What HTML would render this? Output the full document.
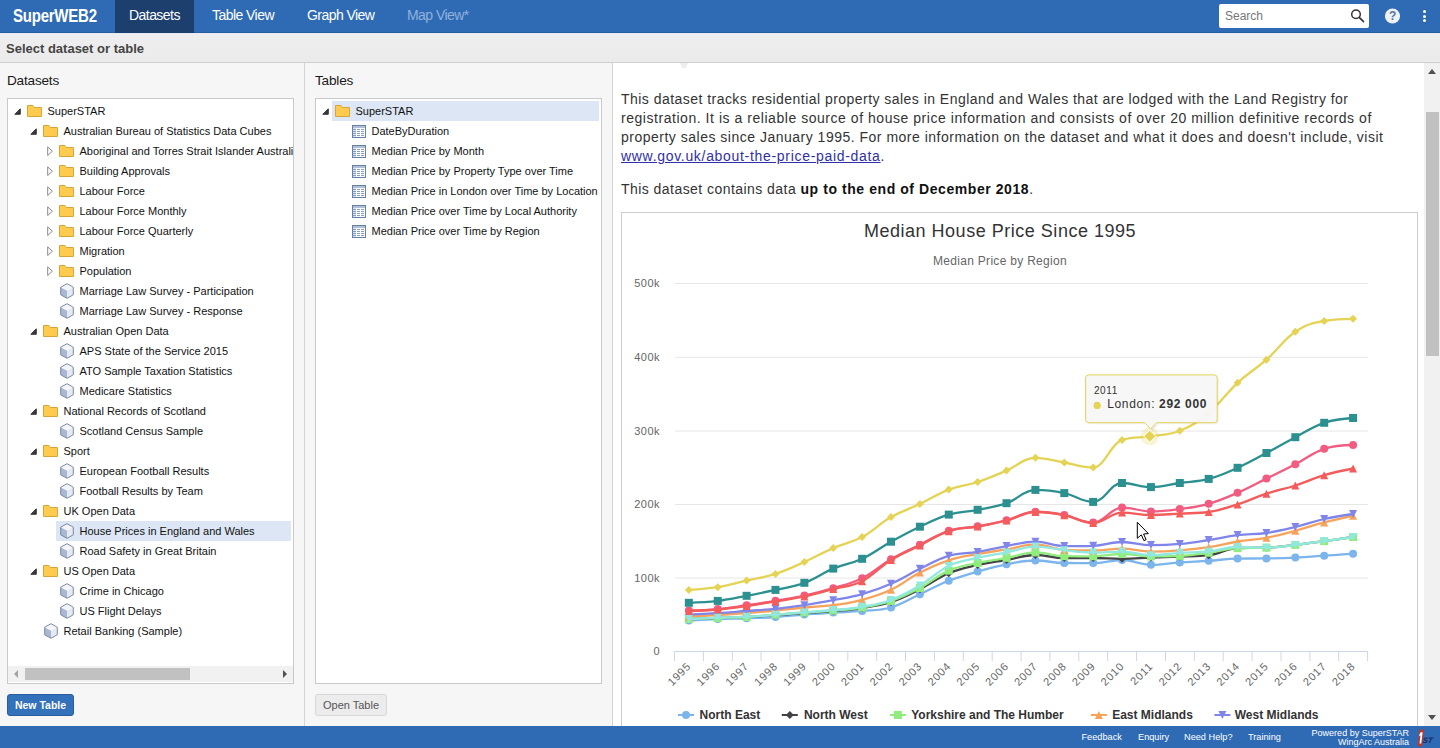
<!DOCTYPE html>
<html><head><meta charset="utf-8">
<style>
*{box-sizing:border-box}
html,body{margin:0;padding:0;width:1440px;height:748px;overflow:hidden;background:#f6f6f6;font-family:"Liberation Sans",sans-serif;color:#222}
.abs{position:absolute}
#hdr{position:absolute;left:0;top:0;width:1440px;height:33px;background:#2f6bb5;border-bottom:1px solid #2a5e9f}
#hdr .nav{position:absolute;top:0;height:33px;line-height:31px;font-size:14px;color:#fff;white-space:nowrap;letter-spacing:-0.55px}
#logo{position:absolute;left:13px;top:0;line-height:32px;font-size:19px;font-weight:bold;color:#fff;transform:scaleX(0.79);transform-origin:0 0;white-space:nowrap;letter-spacing:-0.3px}
#sub{position:absolute;left:0;top:33px;width:1440px;height:30px;background:linear-gradient(#eeeef0,#ebebeb);border-top:1px solid #e6eaf3;border-bottom:1px solid #cfcfcf}
#sub span{position:absolute;left:6px;top:7px;font-size:13px;font-weight:bold;color:#444}
.panel{position:absolute;top:63px;height:663px;background:#f6f6f6}
.ptitle{position:absolute;top:73px;font-size:13.6px;letter-spacing:-0.2px;color:#1a1a1a}
.tbox{position:absolute;top:98px;height:586px;background:#fff;border:1px solid #c9c9c9;overflow:hidden}
.row{position:absolute;height:20px;line-height:20px;font-size:11px;color:#111;white-space:nowrap}
.sel{position:absolute;height:20px;background:#dce6f4}
.fold{position:absolute;width:15px;height:12px}
.btn{position:absolute;top:694px;height:22px;border-radius:3px;font-size:11px;line-height:20px;text-align:center;white-space:nowrap}
#right{position:absolute;left:613px;top:63px;width:811px;height:663px;background:#fff}
#vscroll{position:absolute;left:1424px;top:63px;width:16px;height:663px;background:#f1f1f1}
#ftr{position:absolute;left:0;top:726px;width:1440px;height:22px;background:#2f6bb5;color:#fff;font-size:10.5px}
#ftr span{position:absolute;white-space:nowrap}
p.c{position:absolute;margin:0;left:621px;font-size:14px;line-height:19px;color:#333;white-space:nowrap;letter-spacing:0.42px}
</style></head><body>

<div id="hdr">
  <div id="logo">SuperWEB2</div>
  <div class="abs" style="left:115px;top:0;width:79px;height:33px;background:#1c3f6e"></div>
  <div class="nav" style="left:129px">Datasets</div>
  <div class="nav" style="left:212px">Table View</div>
  <div class="nav" style="left:307px">Graph View</div>
  <div class="nav" style="left:407px;color:#8fb1dc">Map View*</div>
  <div class="abs" style="left:1219px;top:4px;width:150px;height:24px;background:#fff;border-radius:2px"></div>
  <div class="abs" style="left:1225px;top:9px;font-size:12px;color:#777">Search</div>
  <svg class="abs" style="left:1349px;top:8px" width="16" height="16" viewBox="0 0 16 16"><circle cx="7" cy="6.2" r="4.3" fill="none" stroke="#333" stroke-width="1.5"/><path d="M10.2 9.4 L14.5 13.6" stroke="#333" stroke-width="1.6" stroke-linecap="round"/></svg>
  <svg class="abs" style="left:1384px;top:8px" width="17" height="17" viewBox="0 0 17 17"><circle cx="8.5" cy="8" r="7.6" fill="#eef2f8"/><text x="8.6" y="12.4" text-anchor="middle" font-size="12" font-weight="bold" fill="#56739f" font-family="Liberation Sans">?</text></svg>
  <div class="abs" style="left:1423px;top:9.6px;width:3px;height:3px;background:#fff;border-radius:2px"></div>
  <div class="abs" style="left:1423px;top:14.5px;width:3px;height:3px;background:#fff;border-radius:2px"></div>
  <div class="abs" style="left:1423px;top:19.3px;width:3px;height:3px;background:#fff;border-radius:2px"></div>
</div>

<div id="sub"><span>Select dataset or table</span></div>

<!-- LEFT PANEL -->
<div class="panel" style="left:0;width:305px;border-right:1px solid #d4d4d4"></div>
<div class="ptitle" style="left:7px">Datasets</div>
<div class="tbox" style="left:7px;width:287px" id="dtree">
<svg class="abs" style="left:6px;top:8.5px" width="8" height="8" viewBox="0 0 8 8"><path d="M6.3 0.8 L6.3 6.3 L0.8 6.3 Z" fill="#3a3a3a" stroke="#2a2a2a" stroke-width="0.9" stroke-linejoin="round"/></svg>
<svg class="abs" style="left:19px;top:6px" width="15" height="12" viewBox="0 0 15 12"><path d="M0.5 0.5 L6 0.5 L7.5 2.5 L14.5 2.5 L14.5 11.5 L0.5 11.5 Z" fill="#fecb4f" stroke="#d6a63a" stroke-width="1"/></svg>
<div class="row" style="left:39.5px;top:2px">SuperSTAR</div>
<svg class="abs" style="left:22px;top:28.5px" width="8" height="8" viewBox="0 0 8 8"><path d="M6.3 0.8 L6.3 6.3 L0.8 6.3 Z" fill="#3a3a3a" stroke="#2a2a2a" stroke-width="0.9" stroke-linejoin="round"/></svg>
<svg class="abs" style="left:35px;top:26px" width="15" height="12" viewBox="0 0 15 12"><path d="M0.5 0.5 L6 0.5 L7.5 2.5 L14.5 2.5 L14.5 11.5 L0.5 11.5 Z" fill="#fecb4f" stroke="#d6a63a" stroke-width="1"/></svg>
<div class="row" style="left:55.5px;top:22px">Australian Bureau of Statistics Data Cubes</div>
<svg class="abs" style="left:39px;top:47px" width="7" height="11" viewBox="0 0 7 11"><path d="M0.7 0.9 L5.4 5.2 L0.7 9.5 Z" fill="#fff" stroke="#8a8a8a" stroke-width="1" stroke-linejoin="round"/></svg>
<svg class="abs" style="left:51px;top:46px" width="15" height="12" viewBox="0 0 15 12"><path d="M0.5 0.5 L6 0.5 L7.5 2.5 L14.5 2.5 L14.5 11.5 L0.5 11.5 Z" fill="#fecb4f" stroke="#d6a63a" stroke-width="1"/></svg>
<div class="row" style="left:71.5px;top:42px">Aboriginal and Torres Strait Islander Australians</div>
<svg class="abs" style="left:39px;top:67px" width="7" height="11" viewBox="0 0 7 11"><path d="M0.7 0.9 L5.4 5.2 L0.7 9.5 Z" fill="#fff" stroke="#8a8a8a" stroke-width="1" stroke-linejoin="round"/></svg>
<svg class="abs" style="left:51px;top:66px" width="15" height="12" viewBox="0 0 15 12"><path d="M0.5 0.5 L6 0.5 L7.5 2.5 L14.5 2.5 L14.5 11.5 L0.5 11.5 Z" fill="#fecb4f" stroke="#d6a63a" stroke-width="1"/></svg>
<div class="row" style="left:71.5px;top:62px">Building Approvals</div>
<svg class="abs" style="left:39px;top:87px" width="7" height="11" viewBox="0 0 7 11"><path d="M0.7 0.9 L5.4 5.2 L0.7 9.5 Z" fill="#fff" stroke="#8a8a8a" stroke-width="1" stroke-linejoin="round"/></svg>
<svg class="abs" style="left:51px;top:86px" width="15" height="12" viewBox="0 0 15 12"><path d="M0.5 0.5 L6 0.5 L7.5 2.5 L14.5 2.5 L14.5 11.5 L0.5 11.5 Z" fill="#fecb4f" stroke="#d6a63a" stroke-width="1"/></svg>
<div class="row" style="left:71.5px;top:82px">Labour Force</div>
<svg class="abs" style="left:39px;top:107px" width="7" height="11" viewBox="0 0 7 11"><path d="M0.7 0.9 L5.4 5.2 L0.7 9.5 Z" fill="#fff" stroke="#8a8a8a" stroke-width="1" stroke-linejoin="round"/></svg>
<svg class="abs" style="left:51px;top:106px" width="15" height="12" viewBox="0 0 15 12"><path d="M0.5 0.5 L6 0.5 L7.5 2.5 L14.5 2.5 L14.5 11.5 L0.5 11.5 Z" fill="#fecb4f" stroke="#d6a63a" stroke-width="1"/></svg>
<div class="row" style="left:71.5px;top:102px">Labour Force Monthly</div>
<svg class="abs" style="left:39px;top:127px" width="7" height="11" viewBox="0 0 7 11"><path d="M0.7 0.9 L5.4 5.2 L0.7 9.5 Z" fill="#fff" stroke="#8a8a8a" stroke-width="1" stroke-linejoin="round"/></svg>
<svg class="abs" style="left:51px;top:126px" width="15" height="12" viewBox="0 0 15 12"><path d="M0.5 0.5 L6 0.5 L7.5 2.5 L14.5 2.5 L14.5 11.5 L0.5 11.5 Z" fill="#fecb4f" stroke="#d6a63a" stroke-width="1"/></svg>
<div class="row" style="left:71.5px;top:122px">Labour Force Quarterly</div>
<svg class="abs" style="left:39px;top:147px" width="7" height="11" viewBox="0 0 7 11"><path d="M0.7 0.9 L5.4 5.2 L0.7 9.5 Z" fill="#fff" stroke="#8a8a8a" stroke-width="1" stroke-linejoin="round"/></svg>
<svg class="abs" style="left:51px;top:146px" width="15" height="12" viewBox="0 0 15 12"><path d="M0.5 0.5 L6 0.5 L7.5 2.5 L14.5 2.5 L14.5 11.5 L0.5 11.5 Z" fill="#fecb4f" stroke="#d6a63a" stroke-width="1"/></svg>
<div class="row" style="left:71.5px;top:142px">Migration</div>
<svg class="abs" style="left:39px;top:167px" width="7" height="11" viewBox="0 0 7 11"><path d="M0.7 0.9 L5.4 5.2 L0.7 9.5 Z" fill="#fff" stroke="#8a8a8a" stroke-width="1" stroke-linejoin="round"/></svg>
<svg class="abs" style="left:51px;top:166px" width="15" height="12" viewBox="0 0 15 12"><path d="M0.5 0.5 L6 0.5 L7.5 2.5 L14.5 2.5 L14.5 11.5 L0.5 11.5 Z" fill="#fecb4f" stroke="#d6a63a" stroke-width="1"/></svg>
<div class="row" style="left:71.5px;top:162px">Population</div>
<svg class="abs" style="left:52px;top:184px" width="14" height="16" viewBox="0 0 14 16"><path d="M0.7 4.2 L7 7.6 L7 15.3 L0.7 11.8 Z" fill="#a9b9d4"/><path d="M7 7.6 L13.3 4.2 L13.3 11.8 L7 15.3 Z" fill="#e4e9f3"/><path d="M0.7 4.2 L7 0.7 L13.3 4.2 L7 7.6 Z" fill="#f3f5f9"/><path d="M7 0.7 L13.3 4.2 L13.3 11.8 L7 15.3 L0.7 11.8 L0.7 4.2 Z" fill="none" stroke="#6f7f98" stroke-width="0.9" stroke-linejoin="round"/></svg>
<div class="row" style="left:71.5px;top:182px">Marriage Law Survey - Participation</div>
<svg class="abs" style="left:52px;top:204px" width="14" height="16" viewBox="0 0 14 16"><path d="M0.7 4.2 L7 7.6 L7 15.3 L0.7 11.8 Z" fill="#a9b9d4"/><path d="M7 7.6 L13.3 4.2 L13.3 11.8 L7 15.3 Z" fill="#e4e9f3"/><path d="M0.7 4.2 L7 0.7 L13.3 4.2 L7 7.6 Z" fill="#f3f5f9"/><path d="M7 0.7 L13.3 4.2 L13.3 11.8 L7 15.3 L0.7 11.8 L0.7 4.2 Z" fill="none" stroke="#6f7f98" stroke-width="0.9" stroke-linejoin="round"/></svg>
<div class="row" style="left:71.5px;top:202px">Marriage Law Survey - Response</div>
<svg class="abs" style="left:22px;top:228.5px" width="8" height="8" viewBox="0 0 8 8"><path d="M6.3 0.8 L6.3 6.3 L0.8 6.3 Z" fill="#3a3a3a" stroke="#2a2a2a" stroke-width="0.9" stroke-linejoin="round"/></svg>
<svg class="abs" style="left:35px;top:226px" width="15" height="12" viewBox="0 0 15 12"><path d="M0.5 0.5 L6 0.5 L7.5 2.5 L14.5 2.5 L14.5 11.5 L0.5 11.5 Z" fill="#fecb4f" stroke="#d6a63a" stroke-width="1"/></svg>
<div class="row" style="left:55.5px;top:222px">Australian Open Data</div>
<svg class="abs" style="left:52px;top:244px" width="14" height="16" viewBox="0 0 14 16"><path d="M0.7 4.2 L7 7.6 L7 15.3 L0.7 11.8 Z" fill="#a9b9d4"/><path d="M7 7.6 L13.3 4.2 L13.3 11.8 L7 15.3 Z" fill="#e4e9f3"/><path d="M0.7 4.2 L7 0.7 L13.3 4.2 L7 7.6 Z" fill="#f3f5f9"/><path d="M7 0.7 L13.3 4.2 L13.3 11.8 L7 15.3 L0.7 11.8 L0.7 4.2 Z" fill="none" stroke="#6f7f98" stroke-width="0.9" stroke-linejoin="round"/></svg>
<div class="row" style="left:71.5px;top:242px">APS State of the Service 2015</div>
<svg class="abs" style="left:52px;top:264px" width="14" height="16" viewBox="0 0 14 16"><path d="M0.7 4.2 L7 7.6 L7 15.3 L0.7 11.8 Z" fill="#a9b9d4"/><path d="M7 7.6 L13.3 4.2 L13.3 11.8 L7 15.3 Z" fill="#e4e9f3"/><path d="M0.7 4.2 L7 0.7 L13.3 4.2 L7 7.6 Z" fill="#f3f5f9"/><path d="M7 0.7 L13.3 4.2 L13.3 11.8 L7 15.3 L0.7 11.8 L0.7 4.2 Z" fill="none" stroke="#6f7f98" stroke-width="0.9" stroke-linejoin="round"/></svg>
<div class="row" style="left:71.5px;top:262px">ATO Sample Taxation Statistics</div>
<svg class="abs" style="left:52px;top:284px" width="14" height="16" viewBox="0 0 14 16"><path d="M0.7 4.2 L7 7.6 L7 15.3 L0.7 11.8 Z" fill="#a9b9d4"/><path d="M7 7.6 L13.3 4.2 L13.3 11.8 L7 15.3 Z" fill="#e4e9f3"/><path d="M0.7 4.2 L7 0.7 L13.3 4.2 L7 7.6 Z" fill="#f3f5f9"/><path d="M7 0.7 L13.3 4.2 L13.3 11.8 L7 15.3 L0.7 11.8 L0.7 4.2 Z" fill="none" stroke="#6f7f98" stroke-width="0.9" stroke-linejoin="round"/></svg>
<div class="row" style="left:71.5px;top:282px">Medicare Statistics</div>
<svg class="abs" style="left:22px;top:308.5px" width="8" height="8" viewBox="0 0 8 8"><path d="M6.3 0.8 L6.3 6.3 L0.8 6.3 Z" fill="#3a3a3a" stroke="#2a2a2a" stroke-width="0.9" stroke-linejoin="round"/></svg>
<svg class="abs" style="left:35px;top:306px" width="15" height="12" viewBox="0 0 15 12"><path d="M0.5 0.5 L6 0.5 L7.5 2.5 L14.5 2.5 L14.5 11.5 L0.5 11.5 Z" fill="#fecb4f" stroke="#d6a63a" stroke-width="1"/></svg>
<div class="row" style="left:55.5px;top:302px">National Records of Scotland</div>
<svg class="abs" style="left:52px;top:324px" width="14" height="16" viewBox="0 0 14 16"><path d="M0.7 4.2 L7 7.6 L7 15.3 L0.7 11.8 Z" fill="#a9b9d4"/><path d="M7 7.6 L13.3 4.2 L13.3 11.8 L7 15.3 Z" fill="#e4e9f3"/><path d="M0.7 4.2 L7 0.7 L13.3 4.2 L7 7.6 Z" fill="#f3f5f9"/><path d="M7 0.7 L13.3 4.2 L13.3 11.8 L7 15.3 L0.7 11.8 L0.7 4.2 Z" fill="none" stroke="#6f7f98" stroke-width="0.9" stroke-linejoin="round"/></svg>
<div class="row" style="left:71.5px;top:322px">Scotland Census Sample</div>
<svg class="abs" style="left:22px;top:348.5px" width="8" height="8" viewBox="0 0 8 8"><path d="M6.3 0.8 L6.3 6.3 L0.8 6.3 Z" fill="#3a3a3a" stroke="#2a2a2a" stroke-width="0.9" stroke-linejoin="round"/></svg>
<svg class="abs" style="left:35px;top:346px" width="15" height="12" viewBox="0 0 15 12"><path d="M0.5 0.5 L6 0.5 L7.5 2.5 L14.5 2.5 L14.5 11.5 L0.5 11.5 Z" fill="#fecb4f" stroke="#d6a63a" stroke-width="1"/></svg>
<div class="row" style="left:55.5px;top:342px">Sport</div>
<svg class="abs" style="left:52px;top:364px" width="14" height="16" viewBox="0 0 14 16"><path d="M0.7 4.2 L7 7.6 L7 15.3 L0.7 11.8 Z" fill="#a9b9d4"/><path d="M7 7.6 L13.3 4.2 L13.3 11.8 L7 15.3 Z" fill="#e4e9f3"/><path d="M0.7 4.2 L7 0.7 L13.3 4.2 L7 7.6 Z" fill="#f3f5f9"/><path d="M7 0.7 L13.3 4.2 L13.3 11.8 L7 15.3 L0.7 11.8 L0.7 4.2 Z" fill="none" stroke="#6f7f98" stroke-width="0.9" stroke-linejoin="round"/></svg>
<div class="row" style="left:71.5px;top:362px">European Football Results</div>
<svg class="abs" style="left:52px;top:384px" width="14" height="16" viewBox="0 0 14 16"><path d="M0.7 4.2 L7 7.6 L7 15.3 L0.7 11.8 Z" fill="#a9b9d4"/><path d="M7 7.6 L13.3 4.2 L13.3 11.8 L7 15.3 Z" fill="#e4e9f3"/><path d="M0.7 4.2 L7 0.7 L13.3 4.2 L7 7.6 Z" fill="#f3f5f9"/><path d="M7 0.7 L13.3 4.2 L13.3 11.8 L7 15.3 L0.7 11.8 L0.7 4.2 Z" fill="none" stroke="#6f7f98" stroke-width="0.9" stroke-linejoin="round"/></svg>
<div class="row" style="left:71.5px;top:382px">Football Results by Team</div>
<svg class="abs" style="left:22px;top:408.5px" width="8" height="8" viewBox="0 0 8 8"><path d="M6.3 0.8 L6.3 6.3 L0.8 6.3 Z" fill="#3a3a3a" stroke="#2a2a2a" stroke-width="0.9" stroke-linejoin="round"/></svg>
<svg class="abs" style="left:35px;top:406px" width="15" height="12" viewBox="0 0 15 12"><path d="M0.5 0.5 L6 0.5 L7.5 2.5 L14.5 2.5 L14.5 11.5 L0.5 11.5 Z" fill="#fecb4f" stroke="#d6a63a" stroke-width="1"/></svg>
<div class="row" style="left:55.5px;top:402px">UK Open Data</div>
<div class="sel" style="left:48px;top:422px;width:235px"></div>
<svg class="abs" style="left:52px;top:424px" width="14" height="16" viewBox="0 0 14 16"><path d="M0.7 4.2 L7 7.6 L7 15.3 L0.7 11.8 Z" fill="#a9b9d4"/><path d="M7 7.6 L13.3 4.2 L13.3 11.8 L7 15.3 Z" fill="#e4e9f3"/><path d="M0.7 4.2 L7 0.7 L13.3 4.2 L7 7.6 Z" fill="#f3f5f9"/><path d="M7 0.7 L13.3 4.2 L13.3 11.8 L7 15.3 L0.7 11.8 L0.7 4.2 Z" fill="none" stroke="#6f7f98" stroke-width="0.9" stroke-linejoin="round"/></svg>
<div class="row" style="left:71.5px;top:422px">House Prices in England and Wales</div>
<svg class="abs" style="left:52px;top:444px" width="14" height="16" viewBox="0 0 14 16"><path d="M0.7 4.2 L7 7.6 L7 15.3 L0.7 11.8 Z" fill="#a9b9d4"/><path d="M7 7.6 L13.3 4.2 L13.3 11.8 L7 15.3 Z" fill="#e4e9f3"/><path d="M0.7 4.2 L7 0.7 L13.3 4.2 L7 7.6 Z" fill="#f3f5f9"/><path d="M7 0.7 L13.3 4.2 L13.3 11.8 L7 15.3 L0.7 11.8 L0.7 4.2 Z" fill="none" stroke="#6f7f98" stroke-width="0.9" stroke-linejoin="round"/></svg>
<div class="row" style="left:71.5px;top:442px">Road Safety in Great Britain</div>
<svg class="abs" style="left:22px;top:468.5px" width="8" height="8" viewBox="0 0 8 8"><path d="M6.3 0.8 L6.3 6.3 L0.8 6.3 Z" fill="#3a3a3a" stroke="#2a2a2a" stroke-width="0.9" stroke-linejoin="round"/></svg>
<svg class="abs" style="left:35px;top:466px" width="15" height="12" viewBox="0 0 15 12"><path d="M0.5 0.5 L6 0.5 L7.5 2.5 L14.5 2.5 L14.5 11.5 L0.5 11.5 Z" fill="#fecb4f" stroke="#d6a63a" stroke-width="1"/></svg>
<div class="row" style="left:55.5px;top:462px">US Open Data</div>
<svg class="abs" style="left:52px;top:484px" width="14" height="16" viewBox="0 0 14 16"><path d="M0.7 4.2 L7 7.6 L7 15.3 L0.7 11.8 Z" fill="#a9b9d4"/><path d="M7 7.6 L13.3 4.2 L13.3 11.8 L7 15.3 Z" fill="#e4e9f3"/><path d="M0.7 4.2 L7 0.7 L13.3 4.2 L7 7.6 Z" fill="#f3f5f9"/><path d="M7 0.7 L13.3 4.2 L13.3 11.8 L7 15.3 L0.7 11.8 L0.7 4.2 Z" fill="none" stroke="#6f7f98" stroke-width="0.9" stroke-linejoin="round"/></svg>
<div class="row" style="left:71.5px;top:482px">Crime in Chicago</div>
<svg class="abs" style="left:52px;top:504px" width="14" height="16" viewBox="0 0 14 16"><path d="M0.7 4.2 L7 7.6 L7 15.3 L0.7 11.8 Z" fill="#a9b9d4"/><path d="M7 7.6 L13.3 4.2 L13.3 11.8 L7 15.3 Z" fill="#e4e9f3"/><path d="M0.7 4.2 L7 0.7 L13.3 4.2 L7 7.6 Z" fill="#f3f5f9"/><path d="M7 0.7 L13.3 4.2 L13.3 11.8 L7 15.3 L0.7 11.8 L0.7 4.2 Z" fill="none" stroke="#6f7f98" stroke-width="0.9" stroke-linejoin="round"/></svg>
<div class="row" style="left:71.5px;top:502px">US Flight Delays</div>
<svg class="abs" style="left:36px;top:524px" width="14" height="16" viewBox="0 0 14 16"><path d="M0.7 4.2 L7 7.6 L7 15.3 L0.7 11.8 Z" fill="#a9b9d4"/><path d="M7 7.6 L13.3 4.2 L13.3 11.8 L7 15.3 Z" fill="#e4e9f3"/><path d="M0.7 4.2 L7 0.7 L13.3 4.2 L7 7.6 Z" fill="#f3f5f9"/><path d="M7 0.7 L13.3 4.2 L13.3 11.8 L7 15.3 L0.7 11.8 L0.7 4.2 Z" fill="none" stroke="#6f7f98" stroke-width="0.9" stroke-linejoin="round"/></svg>
<div class="row" style="left:55.5px;top:522px">Retail Banking (Sample)</div>
<div class="abs" style="left:0;top:567px;width:285px;height:16px;background:#f1f1f1"></div>
<div class="abs" style="left:17px;top:569px;width:165px;height:12px;background:#c1c1c1"></div>
<svg class="abs" style="left:3px;top:569px" width="10" height="12"><path d="M7 2 L7 10 L3 6 Z" fill="#a3a3a3"/></svg>
<svg class="abs" style="left:272px;top:569px" width="10" height="12"><path d="M3 2 L3 10 L7 6 Z" fill="#505050"/></svg>
</div>
<div class="btn" style="left:7px;width:67px;background:#3471bb;border:1px solid #2a5d9f;color:#fff;font-weight:bold;font-size:10.5px">New Table</div>

<!-- MIDDLE PANEL -->
<div class="panel" style="left:305px;width:308px;border-right:1px solid #d4d4d4"></div>
<div class="ptitle" style="left:315px">Tables</div>
<div class="tbox" style="left:315px;width:287px" id="ttree">
<div class="sel" style="left:16px;top:2px;width:267px"></div>
<svg class="abs" style="left:6px;top:8.5px" width="8" height="8" viewBox="0 0 8 8"><path d="M6.3 0.8 L6.3 6.3 L0.8 6.3 Z" fill="#3a3a3a" stroke="#2a2a2a" stroke-width="0.9" stroke-linejoin="round"/></svg>
<svg class="abs" style="left:19px;top:6px" width="15" height="12" viewBox="0 0 15 12"><path d="M0.5 0.5 L6 0.5 L7.5 2.5 L14.5 2.5 L14.5 11.5 L0.5 11.5 Z" fill="#fecb4f" stroke="#d6a63a" stroke-width="1"/></svg>
<div class="row" style="left:39.5px;top:2px">SuperSTAR</div>
<svg class="abs" style="left:36px;top:26px" width="14" height="13" viewBox="0 0 14 13" shape-rendering="crispEdges"><rect x="0" y="0" width="14" height="13" fill="#6580ab"/><rect x="1" y="1" width="12" height="11" fill="#fbfdff"/><rect x="1" y="1" width="12" height="2" fill="#b3bfd2"/><rect x="1" y="3" width="3" height="9" fill="#d3e3fa"/><g fill="#8f9fbb"><rect x="1" y="4" width="3" height="1"/><rect x="5" y="4" width="3" height="1"/><rect x="9" y="4" width="3" height="1"/><rect x="1" y="6" width="3" height="1"/><rect x="5" y="6" width="3" height="1"/><rect x="9" y="6" width="3" height="1"/><rect x="1" y="8" width="3" height="1"/><rect x="5" y="8" width="3" height="1"/><rect x="9" y="8" width="3" height="1"/><rect x="1" y="10" width="3" height="1"/><rect x="5" y="10" width="3" height="1"/><rect x="9" y="10" width="3" height="1"/></g></svg>
<div class="row" style="left:55.5px;top:22px">DateByDuration</div>
<svg class="abs" style="left:36px;top:46px" width="14" height="13" viewBox="0 0 14 13" shape-rendering="crispEdges"><rect x="0" y="0" width="14" height="13" fill="#6580ab"/><rect x="1" y="1" width="12" height="11" fill="#fbfdff"/><rect x="1" y="1" width="12" height="2" fill="#b3bfd2"/><rect x="1" y="3" width="3" height="9" fill="#d3e3fa"/><g fill="#8f9fbb"><rect x="1" y="4" width="3" height="1"/><rect x="5" y="4" width="3" height="1"/><rect x="9" y="4" width="3" height="1"/><rect x="1" y="6" width="3" height="1"/><rect x="5" y="6" width="3" height="1"/><rect x="9" y="6" width="3" height="1"/><rect x="1" y="8" width="3" height="1"/><rect x="5" y="8" width="3" height="1"/><rect x="9" y="8" width="3" height="1"/><rect x="1" y="10" width="3" height="1"/><rect x="5" y="10" width="3" height="1"/><rect x="9" y="10" width="3" height="1"/></g></svg>
<div class="row" style="left:55.5px;top:42px">Median Price by Month</div>
<svg class="abs" style="left:36px;top:66px" width="14" height="13" viewBox="0 0 14 13" shape-rendering="crispEdges"><rect x="0" y="0" width="14" height="13" fill="#6580ab"/><rect x="1" y="1" width="12" height="11" fill="#fbfdff"/><rect x="1" y="1" width="12" height="2" fill="#b3bfd2"/><rect x="1" y="3" width="3" height="9" fill="#d3e3fa"/><g fill="#8f9fbb"><rect x="1" y="4" width="3" height="1"/><rect x="5" y="4" width="3" height="1"/><rect x="9" y="4" width="3" height="1"/><rect x="1" y="6" width="3" height="1"/><rect x="5" y="6" width="3" height="1"/><rect x="9" y="6" width="3" height="1"/><rect x="1" y="8" width="3" height="1"/><rect x="5" y="8" width="3" height="1"/><rect x="9" y="8" width="3" height="1"/><rect x="1" y="10" width="3" height="1"/><rect x="5" y="10" width="3" height="1"/><rect x="9" y="10" width="3" height="1"/></g></svg>
<div class="row" style="left:55.5px;top:62px">Median Price by Property Type over Time</div>
<svg class="abs" style="left:36px;top:86px" width="14" height="13" viewBox="0 0 14 13" shape-rendering="crispEdges"><rect x="0" y="0" width="14" height="13" fill="#6580ab"/><rect x="1" y="1" width="12" height="11" fill="#fbfdff"/><rect x="1" y="1" width="12" height="2" fill="#b3bfd2"/><rect x="1" y="3" width="3" height="9" fill="#d3e3fa"/><g fill="#8f9fbb"><rect x="1" y="4" width="3" height="1"/><rect x="5" y="4" width="3" height="1"/><rect x="9" y="4" width="3" height="1"/><rect x="1" y="6" width="3" height="1"/><rect x="5" y="6" width="3" height="1"/><rect x="9" y="6" width="3" height="1"/><rect x="1" y="8" width="3" height="1"/><rect x="5" y="8" width="3" height="1"/><rect x="9" y="8" width="3" height="1"/><rect x="1" y="10" width="3" height="1"/><rect x="5" y="10" width="3" height="1"/><rect x="9" y="10" width="3" height="1"/></g></svg>
<div class="row" style="left:55.5px;top:82px">Median Price in London over Time by Location</div>
<svg class="abs" style="left:36px;top:106px" width="14" height="13" viewBox="0 0 14 13" shape-rendering="crispEdges"><rect x="0" y="0" width="14" height="13" fill="#6580ab"/><rect x="1" y="1" width="12" height="11" fill="#fbfdff"/><rect x="1" y="1" width="12" height="2" fill="#b3bfd2"/><rect x="1" y="3" width="3" height="9" fill="#d3e3fa"/><g fill="#8f9fbb"><rect x="1" y="4" width="3" height="1"/><rect x="5" y="4" width="3" height="1"/><rect x="9" y="4" width="3" height="1"/><rect x="1" y="6" width="3" height="1"/><rect x="5" y="6" width="3" height="1"/><rect x="9" y="6" width="3" height="1"/><rect x="1" y="8" width="3" height="1"/><rect x="5" y="8" width="3" height="1"/><rect x="9" y="8" width="3" height="1"/><rect x="1" y="10" width="3" height="1"/><rect x="5" y="10" width="3" height="1"/><rect x="9" y="10" width="3" height="1"/></g></svg>
<div class="row" style="left:55.5px;top:102px">Median Price over Time by Local Authority</div>
<svg class="abs" style="left:36px;top:126px" width="14" height="13" viewBox="0 0 14 13" shape-rendering="crispEdges"><rect x="0" y="0" width="14" height="13" fill="#6580ab"/><rect x="1" y="1" width="12" height="11" fill="#fbfdff"/><rect x="1" y="1" width="12" height="2" fill="#b3bfd2"/><rect x="1" y="3" width="3" height="9" fill="#d3e3fa"/><g fill="#8f9fbb"><rect x="1" y="4" width="3" height="1"/><rect x="5" y="4" width="3" height="1"/><rect x="9" y="4" width="3" height="1"/><rect x="1" y="6" width="3" height="1"/><rect x="5" y="6" width="3" height="1"/><rect x="9" y="6" width="3" height="1"/><rect x="1" y="8" width="3" height="1"/><rect x="5" y="8" width="3" height="1"/><rect x="9" y="8" width="3" height="1"/><rect x="1" y="10" width="3" height="1"/><rect x="5" y="10" width="3" height="1"/><rect x="9" y="10" width="3" height="1"/></g></svg>
<div class="row" style="left:55.5px;top:122px">Median Price over Time by Region</div>
</div>
<div class="btn" style="left:315px;width:72px;background:#ececec;border:1px solid #d8d8d8;color:#555">Open Table</div>

<!-- RIGHT -->
<div id="right"></div>
<p class="c" style="top:90px;letter-spacing:0.463px">This dataset tracks residential property sales in England and Wales that are lodged with the Land Registry for</p>
<p class="c" style="top:109px;letter-spacing:0.54px">registration. It is a reliable source of house price information and consists of over 20 million definitive records of</p>
<p class="c" style="top:128px;letter-spacing:0.5px">property sales since January 1995. For more information on the dataset and what it does and doesn't include, visit</p>
<p class="c" style="top:147px;letter-spacing:0.69px"><span style="color:#3030a8;text-decoration:underline">www.gov.uk/about-the-price-paid-data</span>.</p>
<p class="c" style="top:180px;letter-spacing:0.45px">This dataset contains data <b style="color:#111;letter-spacing:0.57px">up to the end of December 2018</b>.</p>
<div class="abs" style="left:680px;top:63px;width:8px;height:5px;background:#eeeeee;clip-path:polygon(0 0,100% 0,75% 100%,25% 100%)"></div>
<div class="abs" style="left:621px;top:212px;width:797px;height:530px;border:1px solid #cdcdcd;background:#fff"></div>
<svg class="abs" style="left:0;top:0" width="1440" height="726" font-family="Liberation Sans, sans-serif">
<text x="1000" y="236.5" text-anchor="middle" font-size="18" fill="#333333" letter-spacing="0.52">Median House Price Since 1995</text>
<text x="1000" y="264.5" text-anchor="middle" font-size="12" fill="#666666" letter-spacing="0.3">Median Price by Region</text>
<path d="M 675 283.5 L 1368 283.5" stroke="#e6e6e6" stroke-width="1"/>
<path d="M 675 357.3 L 1368 357.3" stroke="#e6e6e6" stroke-width="1"/>
<path d="M 675 431.0 L 1368 431.0" stroke="#e6e6e6" stroke-width="1"/>
<path d="M 675 504.5 L 1368 504.5" stroke="#e6e6e6" stroke-width="1"/>
<path d="M 675 578.0 L 1368 578.0" stroke="#e6e6e6" stroke-width="1"/>
<path d="M 674.5 651.5 L 1367.6 651.5" stroke="#ccd6eb" stroke-width="1"/>
<path d="M 674.5 651.5 L 674.5 661" stroke="#ccd6eb" stroke-width="1"/>
<path d="M 703.4 651.5 L 703.4 661" stroke="#ccd6eb" stroke-width="1"/>
<path d="M 732.3 651.5 L 732.3 661" stroke="#ccd6eb" stroke-width="1"/>
<path d="M 761.1 651.5 L 761.1 661" stroke="#ccd6eb" stroke-width="1"/>
<path d="M 790.0 651.5 L 790.0 661" stroke="#ccd6eb" stroke-width="1"/>
<path d="M 818.9 651.5 L 818.9 661" stroke="#ccd6eb" stroke-width="1"/>
<path d="M 847.8 651.5 L 847.8 661" stroke="#ccd6eb" stroke-width="1"/>
<path d="M 876.7 651.5 L 876.7 661" stroke="#ccd6eb" stroke-width="1"/>
<path d="M 905.5 651.5 L 905.5 661" stroke="#ccd6eb" stroke-width="1"/>
<path d="M 934.4 651.5 L 934.4 661" stroke="#ccd6eb" stroke-width="1"/>
<path d="M 963.3 651.5 L 963.3 661" stroke="#ccd6eb" stroke-width="1"/>
<path d="M 992.2 651.5 L 992.2 661" stroke="#ccd6eb" stroke-width="1"/>
<path d="M 1021.1 651.5 L 1021.1 661" stroke="#ccd6eb" stroke-width="1"/>
<path d="M 1049.9 651.5 L 1049.9 661" stroke="#ccd6eb" stroke-width="1"/>
<path d="M 1078.8 651.5 L 1078.8 661" stroke="#ccd6eb" stroke-width="1"/>
<path d="M 1107.7 651.5 L 1107.7 661" stroke="#ccd6eb" stroke-width="1"/>
<path d="M 1136.6 651.5 L 1136.6 661" stroke="#ccd6eb" stroke-width="1"/>
<path d="M 1165.5 651.5 L 1165.5 661" stroke="#ccd6eb" stroke-width="1"/>
<path d="M 1194.3 651.5 L 1194.3 661" stroke="#ccd6eb" stroke-width="1"/>
<path d="M 1223.2 651.5 L 1223.2 661" stroke="#ccd6eb" stroke-width="1"/>
<path d="M 1252.1 651.5 L 1252.1 661" stroke="#ccd6eb" stroke-width="1"/>
<path d="M 1281.0 651.5 L 1281.0 661" stroke="#ccd6eb" stroke-width="1"/>
<path d="M 1309.9 651.5 L 1309.9 661" stroke="#ccd6eb" stroke-width="1"/>
<path d="M 1338.7 651.5 L 1338.7 661" stroke="#ccd6eb" stroke-width="1"/>
<path d="M 1367.6 651.5 L 1367.6 661" stroke="#ccd6eb" stroke-width="1"/>
<text x="660" y="287.1" text-anchor="end" font-size="11" fill="#666666" letter-spacing="0.5">500k</text>
<text x="660" y="360.9" text-anchor="end" font-size="11" fill="#666666" letter-spacing="0.5">400k</text>
<text x="660" y="434.6" text-anchor="end" font-size="11" fill="#666666" letter-spacing="0.5">300k</text>
<text x="660" y="508.1" text-anchor="end" font-size="11" fill="#666666" letter-spacing="0.5">200k</text>
<text x="660" y="581.6" text-anchor="end" font-size="11" fill="#666666" letter-spacing="0.5">100k</text>
<text x="660" y="655.1" text-anchor="end" font-size="11" fill="#666666" letter-spacing="0.5">0</text>
<text x="691.6" y="667" text-anchor="end" font-size="11" fill="#666666" letter-spacing="0.75" transform="rotate(-45 691.6 667)">1995</text>
<text x="720.5" y="667" text-anchor="end" font-size="11" fill="#666666" letter-spacing="0.75" transform="rotate(-45 720.5 667)">1996</text>
<text x="749.4" y="667" text-anchor="end" font-size="11" fill="#666666" letter-spacing="0.75" transform="rotate(-45 749.4 667)">1997</text>
<text x="778.3" y="667" text-anchor="end" font-size="11" fill="#666666" letter-spacing="0.75" transform="rotate(-45 778.3 667)">1998</text>
<text x="807.2" y="667" text-anchor="end" font-size="11" fill="#666666" letter-spacing="0.75" transform="rotate(-45 807.2 667)">1999</text>
<text x="836.0" y="667" text-anchor="end" font-size="11" fill="#666666" letter-spacing="0.75" transform="rotate(-45 836.0 667)">2000</text>
<text x="864.9" y="667" text-anchor="end" font-size="11" fill="#666666" letter-spacing="0.75" transform="rotate(-45 864.9 667)">2001</text>
<text x="893.8" y="667" text-anchor="end" font-size="11" fill="#666666" letter-spacing="0.75" transform="rotate(-45 893.8 667)">2002</text>
<text x="922.7" y="667" text-anchor="end" font-size="11" fill="#666666" letter-spacing="0.75" transform="rotate(-45 922.7 667)">2003</text>
<text x="951.6" y="667" text-anchor="end" font-size="11" fill="#666666" letter-spacing="0.75" transform="rotate(-45 951.6 667)">2004</text>
<text x="980.5" y="667" text-anchor="end" font-size="11" fill="#666666" letter-spacing="0.75" transform="rotate(-45 980.5 667)">2005</text>
<text x="1009.3" y="667" text-anchor="end" font-size="11" fill="#666666" letter-spacing="0.75" transform="rotate(-45 1009.3 667)">2006</text>
<text x="1038.2" y="667" text-anchor="end" font-size="11" fill="#666666" letter-spacing="0.75" transform="rotate(-45 1038.2 667)">2007</text>
<text x="1067.1" y="667" text-anchor="end" font-size="11" fill="#666666" letter-spacing="0.75" transform="rotate(-45 1067.1 667)">2008</text>
<text x="1096.0" y="667" text-anchor="end" font-size="11" fill="#666666" letter-spacing="0.75" transform="rotate(-45 1096.0 667)">2009</text>
<text x="1124.8" y="667" text-anchor="end" font-size="11" fill="#666666" letter-spacing="0.75" transform="rotate(-45 1124.8 667)">2010</text>
<text x="1153.7" y="667" text-anchor="end" font-size="11" fill="#666666" letter-spacing="0.75" transform="rotate(-45 1153.7 667)">2011</text>
<text x="1182.6" y="667" text-anchor="end" font-size="11" fill="#666666" letter-spacing="0.75" transform="rotate(-45 1182.6 667)">2012</text>
<text x="1211.5" y="667" text-anchor="end" font-size="11" fill="#666666" letter-spacing="0.75" transform="rotate(-45 1211.5 667)">2013</text>
<text x="1240.4" y="667" text-anchor="end" font-size="11" fill="#666666" letter-spacing="0.75" transform="rotate(-45 1240.4 667)">2014</text>
<text x="1269.2" y="667" text-anchor="end" font-size="11" fill="#666666" letter-spacing="0.75" transform="rotate(-45 1269.2 667)">2015</text>
<text x="1298.1" y="667" text-anchor="end" font-size="11" fill="#666666" letter-spacing="0.75" transform="rotate(-45 1298.1 667)">2016</text>
<text x="1327.0" y="667" text-anchor="end" font-size="11" fill="#666666" letter-spacing="0.75" transform="rotate(-45 1327.0 667)">2017</text>
<text x="1355.9" y="667" text-anchor="end" font-size="11" fill="#666666" letter-spacing="0.75" transform="rotate(-45 1355.9 667)">2018</text>
<path d="M 688.85 620.50 C 688.85 620.50 706.18 619.44 717.73 619.00 C 729.28 618.56 735.06 618.70 746.61 618.30 C 758.16 617.90 763.94 617.76 775.49 617.00 C 787.04 616.24 792.82 615.38 804.37 614.50 C 815.92 613.62 821.70 613.32 833.25 612.60 C 844.80 611.88 850.58 611.92 862.13 610.90 C 873.68 609.88 879.46 610.84 891.01 607.50 C 902.56 604.16 908.34 599.54 919.89 594.20 C 931.44 588.86 937.22 585.32 948.77 580.80 C 960.32 576.28 966.10 574.90 977.65 571.60 C 989.20 568.30 994.98 566.52 1006.53 564.30 C 1018.08 562.08 1023.86 560.50 1035.41 560.50 C 1046.96 560.50 1052.74 562.90 1064.29 563.00 C 1075.84 563.10 1081.62 563.10 1093.17 563.10 C 1104.72 563.10 1110.50 560.00 1122.05 560.00 C 1133.60 560.00 1139.38 564.80 1150.93 564.80 C 1162.48 564.80 1168.26 563.20 1179.81 562.40 C 1191.36 561.60 1197.14 561.56 1208.69 560.80 C 1220.24 560.04 1226.02 558.80 1237.57 558.60 C 1249.12 558.40 1254.90 558.60 1266.45 558.40 C 1278.00 558.20 1283.78 558.14 1295.33 557.60 C 1306.88 557.06 1312.66 556.48 1324.21 555.70 C 1335.76 554.92 1353.09 553.70 1353.09 553.70" fill="none" stroke="#7cb5ec" stroke-width="2.3" stroke-linejoin="round" stroke-linecap="round"/>
<circle cx="688.85" cy="620.50" r="4" fill="#7cb5ec"/>
<circle cx="717.73" cy="619.00" r="4" fill="#7cb5ec"/>
<circle cx="746.61" cy="618.30" r="4" fill="#7cb5ec"/>
<circle cx="775.49" cy="617.00" r="4" fill="#7cb5ec"/>
<circle cx="804.37" cy="614.50" r="4" fill="#7cb5ec"/>
<circle cx="833.25" cy="612.60" r="4" fill="#7cb5ec"/>
<circle cx="862.13" cy="610.90" r="4" fill="#7cb5ec"/>
<circle cx="891.01" cy="607.50" r="4" fill="#7cb5ec"/>
<circle cx="919.89" cy="594.20" r="4" fill="#7cb5ec"/>
<circle cx="948.77" cy="580.80" r="4" fill="#7cb5ec"/>
<circle cx="977.65" cy="571.60" r="4" fill="#7cb5ec"/>
<circle cx="1006.53" cy="564.30" r="4" fill="#7cb5ec"/>
<circle cx="1035.41" cy="560.50" r="4" fill="#7cb5ec"/>
<circle cx="1064.29" cy="563.00" r="4" fill="#7cb5ec"/>
<circle cx="1093.17" cy="563.10" r="4" fill="#7cb5ec"/>
<circle cx="1122.05" cy="560.00" r="4" fill="#7cb5ec"/>
<circle cx="1150.93" cy="564.80" r="4" fill="#7cb5ec"/>
<circle cx="1179.81" cy="562.40" r="4" fill="#7cb5ec"/>
<circle cx="1208.69" cy="560.80" r="4" fill="#7cb5ec"/>
<circle cx="1237.57" cy="558.60" r="4" fill="#7cb5ec"/>
<circle cx="1266.45" cy="558.40" r="4" fill="#7cb5ec"/>
<circle cx="1295.33" cy="557.60" r="4" fill="#7cb5ec"/>
<circle cx="1324.21" cy="555.70" r="4" fill="#7cb5ec"/>
<circle cx="1353.09" cy="553.70" r="4" fill="#7cb5ec"/>
<path d="M 688.85 619.00 C 688.85 619.00 706.18 618.40 717.73 618.00 C 729.28 617.60 735.06 617.60 746.61 617.00 C 758.16 616.40 763.94 615.80 775.49 615.00 C 787.04 614.20 792.82 613.80 804.37 613.00 C 815.92 612.20 821.70 612.00 833.25 611.00 C 844.80 610.00 850.58 609.80 862.13 608.00 C 873.68 606.20 879.46 605.76 891.01 602.00 C 902.56 598.24 908.34 594.96 919.89 589.20 C 931.44 583.44 937.22 578.04 948.77 573.20 C 960.32 568.36 966.10 567.64 977.65 565.00 C 989.20 562.36 994.98 562.00 1006.53 560.00 C 1018.08 558.00 1023.86 555.00 1035.41 555.00 C 1046.96 555.00 1052.74 558.00 1064.29 558.00 C 1075.84 558.00 1081.62 558.00 1093.17 558.00 C 1104.72 558.00 1110.50 558.80 1122.05 558.80 C 1133.60 558.80 1139.38 558.06 1150.93 557.60 C 1162.48 557.14 1168.26 556.98 1179.81 556.50 C 1191.36 556.02 1197.14 556.50 1208.69 555.20 C 1220.24 553.90 1226.02 548.30 1237.57 548.00 C 1249.12 547.70 1254.90 548.00 1266.45 547.70 C 1278.00 547.40 1283.78 546.22 1295.33 544.90 C 1306.88 543.58 1312.66 542.68 1324.21 541.10 C 1335.76 539.52 1353.09 537.00 1353.09 537.00" fill="none" stroke="#434348" stroke-width="2.3" stroke-linejoin="round" stroke-linecap="round"/>
<path d="M 688.85 615.00 L 692.85 619.00 L 688.85 623.00 L 684.85 619.00 Z" fill="#434348"/>
<path d="M 717.73 614.00 L 721.73 618.00 L 717.73 622.00 L 713.73 618.00 Z" fill="#434348"/>
<path d="M 746.61 613.00 L 750.61 617.00 L 746.61 621.00 L 742.61 617.00 Z" fill="#434348"/>
<path d="M 775.49 611.00 L 779.49 615.00 L 775.49 619.00 L 771.49 615.00 Z" fill="#434348"/>
<path d="M 804.37 609.00 L 808.37 613.00 L 804.37 617.00 L 800.37 613.00 Z" fill="#434348"/>
<path d="M 833.25 607.00 L 837.25 611.00 L 833.25 615.00 L 829.25 611.00 Z" fill="#434348"/>
<path d="M 862.13 604.00 L 866.13 608.00 L 862.13 612.00 L 858.13 608.00 Z" fill="#434348"/>
<path d="M 891.01 598.00 L 895.01 602.00 L 891.01 606.00 L 887.01 602.00 Z" fill="#434348"/>
<path d="M 919.89 585.20 L 923.89 589.20 L 919.89 593.20 L 915.89 589.20 Z" fill="#434348"/>
<path d="M 948.77 569.20 L 952.77 573.20 L 948.77 577.20 L 944.77 573.20 Z" fill="#434348"/>
<path d="M 977.65 561.00 L 981.65 565.00 L 977.65 569.00 L 973.65 565.00 Z" fill="#434348"/>
<path d="M 1006.53 556.00 L 1010.53 560.00 L 1006.53 564.00 L 1002.53 560.00 Z" fill="#434348"/>
<path d="M 1035.41 551.00 L 1039.41 555.00 L 1035.41 559.00 L 1031.41 555.00 Z" fill="#434348"/>
<path d="M 1064.29 554.00 L 1068.29 558.00 L 1064.29 562.00 L 1060.29 558.00 Z" fill="#434348"/>
<path d="M 1093.17 554.00 L 1097.17 558.00 L 1093.17 562.00 L 1089.17 558.00 Z" fill="#434348"/>
<path d="M 1122.05 554.80 L 1126.05 558.80 L 1122.05 562.80 L 1118.05 558.80 Z" fill="#434348"/>
<path d="M 1150.93 553.60 L 1154.93 557.60 L 1150.93 561.60 L 1146.93 557.60 Z" fill="#434348"/>
<path d="M 1179.81 552.50 L 1183.81 556.50 L 1179.81 560.50 L 1175.81 556.50 Z" fill="#434348"/>
<path d="M 1208.69 551.20 L 1212.69 555.20 L 1208.69 559.20 L 1204.69 555.20 Z" fill="#434348"/>
<path d="M 1237.57 544.00 L 1241.57 548.00 L 1237.57 552.00 L 1233.57 548.00 Z" fill="#434348"/>
<path d="M 1266.45 543.70 L 1270.45 547.70 L 1266.45 551.70 L 1262.45 547.70 Z" fill="#434348"/>
<path d="M 1295.33 540.90 L 1299.33 544.90 L 1295.33 548.90 L 1291.33 544.90 Z" fill="#434348"/>
<path d="M 1324.21 537.10 L 1328.21 541.10 L 1324.21 545.10 L 1320.21 541.10 Z" fill="#434348"/>
<path d="M 1353.09 533.00 L 1357.09 537.00 L 1353.09 541.00 L 1349.09 537.00 Z" fill="#434348"/>
<path d="M 688.85 619.00 C 688.85 619.00 706.18 618.40 717.73 618.00 C 729.28 617.60 735.06 617.68 746.61 617.00 C 758.16 616.32 763.94 615.50 775.49 614.60 C 787.04 613.70 792.82 613.32 804.37 612.50 C 815.92 611.68 821.70 611.50 833.25 610.50 C 844.80 609.50 850.58 609.40 862.13 607.50 C 873.68 605.60 879.46 604.90 891.01 601.00 C 902.56 597.10 908.34 594.08 919.89 588.00 C 931.44 581.92 937.22 575.60 948.77 570.60 C 960.32 565.60 966.10 565.54 977.65 563.00 C 989.20 560.46 994.98 560.02 1006.53 557.90 C 1018.08 555.78 1023.86 552.40 1035.41 552.40 C 1046.96 552.40 1052.74 556.10 1064.29 556.20 C 1075.84 556.30 1081.62 556.30 1093.17 556.30 C 1104.72 556.30 1110.50 554.00 1122.05 554.00 C 1133.60 554.00 1139.38 556.40 1150.93 556.40 C 1162.48 556.40 1168.26 556.40 1179.81 555.90 C 1191.36 555.40 1197.14 554.34 1208.69 552.80 C 1220.24 551.26 1226.02 548.70 1237.57 548.20 C 1249.12 547.70 1254.90 548.20 1266.45 547.70 C 1278.00 547.20 1283.78 546.22 1295.33 544.90 C 1306.88 543.58 1312.66 542.68 1324.21 541.10 C 1335.76 539.52 1353.09 537.00 1353.09 537.00" fill="none" stroke="#90ed7d" stroke-width="2.3" stroke-linejoin="round" stroke-linecap="round"/>
<rect x="684.85" y="615.00" width="8" height="8" fill="#90ed7d"/>
<rect x="713.73" y="614.00" width="8" height="8" fill="#90ed7d"/>
<rect x="742.61" y="613.00" width="8" height="8" fill="#90ed7d"/>
<rect x="771.49" y="610.60" width="8" height="8" fill="#90ed7d"/>
<rect x="800.37" y="608.50" width="8" height="8" fill="#90ed7d"/>
<rect x="829.25" y="606.50" width="8" height="8" fill="#90ed7d"/>
<rect x="858.13" y="603.50" width="8" height="8" fill="#90ed7d"/>
<rect x="887.01" y="597.00" width="8" height="8" fill="#90ed7d"/>
<rect x="915.89" y="584.00" width="8" height="8" fill="#90ed7d"/>
<rect x="944.77" y="566.60" width="8" height="8" fill="#90ed7d"/>
<rect x="973.65" y="559.00" width="8" height="8" fill="#90ed7d"/>
<rect x="1002.53" y="553.90" width="8" height="8" fill="#90ed7d"/>
<rect x="1031.41" y="548.40" width="8" height="8" fill="#90ed7d"/>
<rect x="1060.29" y="552.20" width="8" height="8" fill="#90ed7d"/>
<rect x="1089.17" y="552.30" width="8" height="8" fill="#90ed7d"/>
<rect x="1118.05" y="550.00" width="8" height="8" fill="#90ed7d"/>
<rect x="1146.93" y="552.40" width="8" height="8" fill="#90ed7d"/>
<rect x="1175.81" y="551.90" width="8" height="8" fill="#90ed7d"/>
<rect x="1204.69" y="548.80" width="8" height="8" fill="#90ed7d"/>
<rect x="1233.57" y="544.20" width="8" height="8" fill="#90ed7d"/>
<rect x="1262.45" y="543.70" width="8" height="8" fill="#90ed7d"/>
<rect x="1291.33" y="540.90" width="8" height="8" fill="#90ed7d"/>
<rect x="1320.21" y="537.10" width="8" height="8" fill="#90ed7d"/>
<rect x="1349.09" y="533.00" width="8" height="8" fill="#90ed7d"/>
<path d="M 688.85 616.50 C 688.85 616.50 706.18 615.70 717.73 615.00 C 729.28 614.30 735.06 613.90 746.61 613.00 C 758.16 612.10 763.94 611.60 775.49 610.50 C 787.04 609.40 792.82 608.56 804.37 607.50 C 815.92 606.44 821.70 606.74 833.25 605.20 C 844.80 603.66 850.58 602.88 862.13 599.80 C 873.68 596.72 879.46 595.24 891.01 589.80 C 902.56 584.36 908.34 578.50 919.89 572.60 C 931.44 566.70 937.22 564.02 948.77 560.30 C 960.32 556.58 966.10 556.18 977.65 554.00 C 989.20 551.82 994.98 551.32 1006.53 549.40 C 1018.08 547.48 1023.86 544.40 1035.41 544.40 C 1046.96 544.40 1052.74 549.10 1064.29 549.80 C 1075.84 550.50 1081.62 550.50 1093.17 550.50 C 1104.72 550.50 1110.50 548.70 1122.05 548.70 C 1133.60 548.70 1139.38 551.60 1150.93 551.60 C 1162.48 551.60 1168.26 551.28 1179.81 550.40 C 1191.36 549.52 1197.14 548.98 1208.69 547.20 C 1220.24 545.42 1226.02 543.38 1237.57 541.50 C 1249.12 539.62 1254.90 539.94 1266.45 537.80 C 1278.00 535.66 1283.78 533.88 1295.33 530.80 C 1306.88 527.72 1312.66 525.40 1324.21 522.40 C 1335.76 519.40 1353.09 515.80 1353.09 515.80" fill="none" stroke="#f7a35c" stroke-width="2.3" stroke-linejoin="round" stroke-linecap="round"/>
<path d="M 688.85 612.50 L 692.85 620.50 L 684.85 620.50 Z" fill="#f7a35c"/>
<path d="M 717.73 611.00 L 721.73 619.00 L 713.73 619.00 Z" fill="#f7a35c"/>
<path d="M 746.61 609.00 L 750.61 617.00 L 742.61 617.00 Z" fill="#f7a35c"/>
<path d="M 775.49 606.50 L 779.49 614.50 L 771.49 614.50 Z" fill="#f7a35c"/>
<path d="M 804.37 603.50 L 808.37 611.50 L 800.37 611.50 Z" fill="#f7a35c"/>
<path d="M 833.25 601.20 L 837.25 609.20 L 829.25 609.20 Z" fill="#f7a35c"/>
<path d="M 862.13 595.80 L 866.13 603.80 L 858.13 603.80 Z" fill="#f7a35c"/>
<path d="M 891.01 585.80 L 895.01 593.80 L 887.01 593.80 Z" fill="#f7a35c"/>
<path d="M 919.89 568.60 L 923.89 576.60 L 915.89 576.60 Z" fill="#f7a35c"/>
<path d="M 948.77 556.30 L 952.77 564.30 L 944.77 564.30 Z" fill="#f7a35c"/>
<path d="M 977.65 550.00 L 981.65 558.00 L 973.65 558.00 Z" fill="#f7a35c"/>
<path d="M 1006.53 545.40 L 1010.53 553.40 L 1002.53 553.40 Z" fill="#f7a35c"/>
<path d="M 1035.41 540.40 L 1039.41 548.40 L 1031.41 548.40 Z" fill="#f7a35c"/>
<path d="M 1064.29 545.80 L 1068.29 553.80 L 1060.29 553.80 Z" fill="#f7a35c"/>
<path d="M 1093.17 546.50 L 1097.17 554.50 L 1089.17 554.50 Z" fill="#f7a35c"/>
<path d="M 1122.05 544.70 L 1126.05 552.70 L 1118.05 552.70 Z" fill="#f7a35c"/>
<path d="M 1150.93 547.60 L 1154.93 555.60 L 1146.93 555.60 Z" fill="#f7a35c"/>
<path d="M 1179.81 546.40 L 1183.81 554.40 L 1175.81 554.40 Z" fill="#f7a35c"/>
<path d="M 1208.69 543.20 L 1212.69 551.20 L 1204.69 551.20 Z" fill="#f7a35c"/>
<path d="M 1237.57 537.50 L 1241.57 545.50 L 1233.57 545.50 Z" fill="#f7a35c"/>
<path d="M 1266.45 533.80 L 1270.45 541.80 L 1262.45 541.80 Z" fill="#f7a35c"/>
<path d="M 1295.33 526.80 L 1299.33 534.80 L 1291.33 534.80 Z" fill="#f7a35c"/>
<path d="M 1324.21 518.40 L 1328.21 526.40 L 1320.21 526.40 Z" fill="#f7a35c"/>
<path d="M 1353.09 511.80 L 1357.09 519.80 L 1349.09 519.80 Z" fill="#f7a35c"/>
<path d="M 688.85 614.60 C 688.85 614.60 706.18 613.92 717.73 613.20 C 729.28 612.48 735.06 611.88 746.61 611.00 C 758.16 610.12 763.94 609.96 775.49 608.80 C 787.04 607.64 792.82 606.92 804.37 605.20 C 815.92 603.48 821.70 602.40 833.25 600.20 C 844.80 598.00 850.58 597.48 862.13 594.20 C 873.68 590.92 879.46 588.88 891.01 583.80 C 902.56 578.72 908.34 574.40 919.89 568.80 C 931.44 563.20 937.22 559.18 948.77 555.80 C 960.32 552.42 966.10 553.84 977.65 551.90 C 989.20 549.96 994.98 548.14 1006.53 546.10 C 1018.08 544.06 1023.86 541.70 1035.41 541.70 C 1046.96 541.70 1052.74 546.10 1064.29 546.10 C 1075.84 546.10 1081.62 546.10 1093.17 545.80 C 1104.72 545.50 1110.50 542.00 1122.05 542.00 C 1133.60 542.00 1139.38 545.10 1150.93 545.10 C 1162.48 545.10 1168.26 544.92 1179.81 543.90 C 1191.36 542.88 1197.14 541.76 1208.69 540.00 C 1220.24 538.24 1226.02 536.50 1237.57 535.10 C 1249.12 533.70 1254.90 534.62 1266.45 533.00 C 1278.00 531.38 1283.78 529.80 1295.33 527.00 C 1306.88 524.20 1312.66 521.60 1324.21 519.00 C 1335.76 516.40 1353.09 514.00 1353.09 514.00" fill="none" stroke="#8085e9" stroke-width="2.3" stroke-linejoin="round" stroke-linecap="round"/>
<path d="M 684.85 610.60 L 692.85 610.60 L 688.85 618.60 Z" fill="#8085e9"/>
<path d="M 713.73 609.20 L 721.73 609.20 L 717.73 617.20 Z" fill="#8085e9"/>
<path d="M 742.61 607.00 L 750.61 607.00 L 746.61 615.00 Z" fill="#8085e9"/>
<path d="M 771.49 604.80 L 779.49 604.80 L 775.49 612.80 Z" fill="#8085e9"/>
<path d="M 800.37 601.20 L 808.37 601.20 L 804.37 609.20 Z" fill="#8085e9"/>
<path d="M 829.25 596.20 L 837.25 596.20 L 833.25 604.20 Z" fill="#8085e9"/>
<path d="M 858.13 590.20 L 866.13 590.20 L 862.13 598.20 Z" fill="#8085e9"/>
<path d="M 887.01 579.80 L 895.01 579.80 L 891.01 587.80 Z" fill="#8085e9"/>
<path d="M 915.89 564.80 L 923.89 564.80 L 919.89 572.80 Z" fill="#8085e9"/>
<path d="M 944.77 551.80 L 952.77 551.80 L 948.77 559.80 Z" fill="#8085e9"/>
<path d="M 973.65 547.90 L 981.65 547.90 L 977.65 555.90 Z" fill="#8085e9"/>
<path d="M 1002.53 542.10 L 1010.53 542.10 L 1006.53 550.10 Z" fill="#8085e9"/>
<path d="M 1031.41 537.70 L 1039.41 537.70 L 1035.41 545.70 Z" fill="#8085e9"/>
<path d="M 1060.29 542.10 L 1068.29 542.10 L 1064.29 550.10 Z" fill="#8085e9"/>
<path d="M 1089.17 541.80 L 1097.17 541.80 L 1093.17 549.80 Z" fill="#8085e9"/>
<path d="M 1118.05 538.00 L 1126.05 538.00 L 1122.05 546.00 Z" fill="#8085e9"/>
<path d="M 1146.93 541.10 L 1154.93 541.10 L 1150.93 549.10 Z" fill="#8085e9"/>
<path d="M 1175.81 539.90 L 1183.81 539.90 L 1179.81 547.90 Z" fill="#8085e9"/>
<path d="M 1204.69 536.00 L 1212.69 536.00 L 1208.69 544.00 Z" fill="#8085e9"/>
<path d="M 1233.57 531.10 L 1241.57 531.10 L 1237.57 539.10 Z" fill="#8085e9"/>
<path d="M 1262.45 529.00 L 1270.45 529.00 L 1266.45 537.00 Z" fill="#8085e9"/>
<path d="M 1291.33 523.00 L 1299.33 523.00 L 1295.33 531.00 Z" fill="#8085e9"/>
<path d="M 1320.21 515.00 L 1328.21 515.00 L 1324.21 523.00 Z" fill="#8085e9"/>
<path d="M 1349.09 510.00 L 1357.09 510.00 L 1353.09 518.00 Z" fill="#8085e9"/>
<path d="M 688.85 610.50 C 688.85 610.50 706.18 610.16 717.73 609.10 C 729.28 608.04 735.06 606.86 746.61 605.20 C 758.16 603.54 763.94 602.72 775.49 600.80 C 787.04 598.88 792.82 598.12 804.37 595.60 C 815.92 593.08 821.70 591.68 833.25 588.20 C 844.80 584.72 850.58 584.00 862.13 578.20 C 873.68 572.40 879.46 565.90 891.01 559.20 C 902.56 552.50 908.34 550.38 919.89 544.70 C 931.44 539.02 937.22 534.48 948.77 530.80 C 960.32 527.12 966.10 528.40 977.65 526.30 C 989.20 524.20 994.98 523.22 1006.53 520.30 C 1018.08 517.38 1023.86 511.70 1035.41 511.70 C 1046.96 511.70 1052.74 512.72 1064.29 514.90 C 1075.84 517.08 1081.62 522.60 1093.17 522.60 C 1104.72 522.60 1110.50 507.60 1122.05 507.60 C 1133.60 507.60 1139.38 511.40 1150.93 511.40 C 1162.48 511.40 1168.26 510.52 1179.81 509.00 C 1191.36 507.48 1197.14 507.04 1208.69 503.80 C 1220.24 500.56 1226.02 497.84 1237.57 492.80 C 1249.12 487.76 1254.90 484.32 1266.45 478.60 C 1278.00 472.88 1283.78 470.16 1295.33 464.20 C 1306.88 458.24 1312.66 452.60 1324.21 448.80 C 1335.76 445.00 1353.09 445.00 1353.09 445.00" fill="none" stroke="#f15c80" stroke-width="2.3" stroke-linejoin="round" stroke-linecap="round"/>
<circle cx="688.85" cy="610.50" r="4" fill="#f15c80"/>
<circle cx="717.73" cy="609.10" r="4" fill="#f15c80"/>
<circle cx="746.61" cy="605.20" r="4" fill="#f15c80"/>
<circle cx="775.49" cy="600.80" r="4" fill="#f15c80"/>
<circle cx="804.37" cy="595.60" r="4" fill="#f15c80"/>
<circle cx="833.25" cy="588.20" r="4" fill="#f15c80"/>
<circle cx="862.13" cy="578.20" r="4" fill="#f15c80"/>
<circle cx="891.01" cy="559.20" r="4" fill="#f15c80"/>
<circle cx="919.89" cy="544.70" r="4" fill="#f15c80"/>
<circle cx="948.77" cy="530.80" r="4" fill="#f15c80"/>
<circle cx="977.65" cy="526.30" r="4" fill="#f15c80"/>
<circle cx="1006.53" cy="520.30" r="4" fill="#f15c80"/>
<circle cx="1035.41" cy="511.70" r="4" fill="#f15c80"/>
<circle cx="1064.29" cy="514.90" r="4" fill="#f15c80"/>
<circle cx="1093.17" cy="522.60" r="4" fill="#f15c80"/>
<circle cx="1122.05" cy="507.60" r="4" fill="#f15c80"/>
<circle cx="1150.93" cy="511.40" r="4" fill="#f15c80"/>
<circle cx="1179.81" cy="509.00" r="4" fill="#f15c80"/>
<circle cx="1208.69" cy="503.80" r="4" fill="#f15c80"/>
<circle cx="1237.57" cy="492.80" r="4" fill="#f15c80"/>
<circle cx="1266.45" cy="478.60" r="4" fill="#f15c80"/>
<circle cx="1295.33" cy="464.20" r="4" fill="#f15c80"/>
<circle cx="1324.21" cy="448.80" r="4" fill="#f15c80"/>
<circle cx="1353.09" cy="445.00" r="4" fill="#f15c80"/>
<path d="M 688.85 589.90 C 688.85 589.90 706.18 589.06 717.73 587.20 C 729.28 585.34 735.06 583.26 746.61 580.60 C 758.16 577.94 763.94 577.62 775.49 573.90 C 787.04 570.18 792.82 567.16 804.37 562.00 C 815.92 556.84 821.70 553.08 833.25 548.10 C 844.80 543.12 850.58 543.30 862.13 537.10 C 873.68 530.90 879.46 523.72 891.01 517.10 C 902.56 510.48 908.34 509.50 919.89 504.00 C 931.44 498.50 937.22 494.00 948.77 489.60 C 960.32 485.20 966.10 485.80 977.65 482.00 C 989.20 478.20 994.98 475.44 1006.53 470.60 C 1018.08 465.76 1023.86 457.80 1035.41 457.80 C 1046.96 457.80 1052.74 460.58 1064.29 462.50 C 1075.84 464.42 1081.62 467.40 1093.17 467.40 C 1104.72 467.40 1110.50 443.50 1122.05 439.90 C 1133.60 436.30 1139.38 438.12 1150.93 436.30 C 1162.48 434.48 1168.26 435.46 1179.81 430.80 C 1191.36 426.14 1197.14 422.60 1208.69 413.00 C 1220.24 403.40 1226.02 393.46 1237.57 382.80 C 1249.12 372.14 1254.90 369.90 1266.45 359.70 C 1278.00 349.50 1283.78 339.56 1295.33 331.80 C 1306.88 324.04 1312.66 323.00 1324.21 320.90 C 1335.76 318.80 1353.09 318.80 1353.09 318.80" fill="none" stroke="#e4d354" stroke-width="2.3" stroke-linejoin="round" stroke-linecap="round"/>
<path d="M 688.85 585.90 L 692.85 589.90 L 688.85 593.90 L 684.85 589.90 Z" fill="#e4d354"/>
<path d="M 717.73 583.20 L 721.73 587.20 L 717.73 591.20 L 713.73 587.20 Z" fill="#e4d354"/>
<path d="M 746.61 576.60 L 750.61 580.60 L 746.61 584.60 L 742.61 580.60 Z" fill="#e4d354"/>
<path d="M 775.49 569.90 L 779.49 573.90 L 775.49 577.90 L 771.49 573.90 Z" fill="#e4d354"/>
<path d="M 804.37 558.00 L 808.37 562.00 L 804.37 566.00 L 800.37 562.00 Z" fill="#e4d354"/>
<path d="M 833.25 544.10 L 837.25 548.10 L 833.25 552.10 L 829.25 548.10 Z" fill="#e4d354"/>
<path d="M 862.13 533.10 L 866.13 537.10 L 862.13 541.10 L 858.13 537.10 Z" fill="#e4d354"/>
<path d="M 891.01 513.10 L 895.01 517.10 L 891.01 521.10 L 887.01 517.10 Z" fill="#e4d354"/>
<path d="M 919.89 500.00 L 923.89 504.00 L 919.89 508.00 L 915.89 504.00 Z" fill="#e4d354"/>
<path d="M 948.77 485.60 L 952.77 489.60 L 948.77 493.60 L 944.77 489.60 Z" fill="#e4d354"/>
<path d="M 977.65 478.00 L 981.65 482.00 L 977.65 486.00 L 973.65 482.00 Z" fill="#e4d354"/>
<path d="M 1006.53 466.60 L 1010.53 470.60 L 1006.53 474.60 L 1002.53 470.60 Z" fill="#e4d354"/>
<path d="M 1035.41 453.80 L 1039.41 457.80 L 1035.41 461.80 L 1031.41 457.80 Z" fill="#e4d354"/>
<path d="M 1064.29 458.50 L 1068.29 462.50 L 1064.29 466.50 L 1060.29 462.50 Z" fill="#e4d354"/>
<path d="M 1093.17 463.40 L 1097.17 467.40 L 1093.17 471.40 L 1089.17 467.40 Z" fill="#e4d354"/>
<path d="M 1122.05 435.90 L 1126.05 439.90 L 1122.05 443.90 L 1118.05 439.90 Z" fill="#e4d354"/>
<path d="M 1150.93 432.30 L 1154.93 436.30 L 1150.93 440.30 L 1146.93 436.30 Z" fill="#e4d354"/>
<path d="M 1179.81 426.80 L 1183.81 430.80 L 1179.81 434.80 L 1175.81 430.80 Z" fill="#e4d354"/>
<path d="M 1208.69 409.00 L 1212.69 413.00 L 1208.69 417.00 L 1204.69 413.00 Z" fill="#e4d354"/>
<path d="M 1237.57 378.80 L 1241.57 382.80 L 1237.57 386.80 L 1233.57 382.80 Z" fill="#e4d354"/>
<path d="M 1266.45 355.70 L 1270.45 359.70 L 1266.45 363.70 L 1262.45 359.70 Z" fill="#e4d354"/>
<path d="M 1295.33 327.80 L 1299.33 331.80 L 1295.33 335.80 L 1291.33 331.80 Z" fill="#e4d354"/>
<path d="M 1324.21 316.90 L 1328.21 320.90 L 1324.21 324.90 L 1320.21 320.90 Z" fill="#e4d354"/>
<path d="M 1353.09 314.80 L 1357.09 318.80 L 1353.09 322.80 L 1349.09 318.80 Z" fill="#e4d354"/>
<path d="M 688.85 602.80 C 688.85 602.80 706.18 602.30 717.73 600.90 C 729.28 599.50 735.06 598.00 746.61 595.80 C 758.16 593.60 763.94 592.50 775.49 589.90 C 787.04 587.30 792.82 587.06 804.37 582.80 C 815.92 578.54 821.70 573.40 833.25 568.60 C 844.80 563.80 850.58 564.18 862.13 558.80 C 873.68 553.42 879.46 548.12 891.01 541.70 C 902.56 535.28 908.34 532.12 919.89 526.70 C 931.44 521.28 937.22 517.98 948.77 514.60 C 960.32 511.22 966.10 512.08 977.65 509.80 C 989.20 507.52 994.98 507.18 1006.53 503.20 C 1018.08 499.22 1023.86 489.90 1035.41 489.90 C 1046.96 489.90 1052.74 490.70 1064.29 493.10 C 1075.84 495.50 1081.62 501.90 1093.17 501.90 C 1104.72 501.90 1110.50 483.00 1122.05 483.00 C 1133.60 483.00 1139.38 487.10 1150.93 487.10 C 1162.48 487.10 1168.26 484.64 1179.81 483.00 C 1191.36 481.36 1197.14 481.94 1208.69 478.90 C 1220.24 475.86 1226.02 472.98 1237.57 467.80 C 1249.12 462.62 1254.90 459.12 1266.45 453.00 C 1278.00 446.88 1283.78 443.24 1295.33 437.20 C 1306.88 431.16 1312.66 426.64 1324.21 422.80 C 1335.76 418.96 1353.09 418.00 1353.09 418.00" fill="none" stroke="#2b908f" stroke-width="2.3" stroke-linejoin="round" stroke-linecap="round"/>
<rect x="684.85" y="598.80" width="8" height="8" fill="#2b908f"/>
<rect x="713.73" y="596.90" width="8" height="8" fill="#2b908f"/>
<rect x="742.61" y="591.80" width="8" height="8" fill="#2b908f"/>
<rect x="771.49" y="585.90" width="8" height="8" fill="#2b908f"/>
<rect x="800.37" y="578.80" width="8" height="8" fill="#2b908f"/>
<rect x="829.25" y="564.60" width="8" height="8" fill="#2b908f"/>
<rect x="858.13" y="554.80" width="8" height="8" fill="#2b908f"/>
<rect x="887.01" y="537.70" width="8" height="8" fill="#2b908f"/>
<rect x="915.89" y="522.70" width="8" height="8" fill="#2b908f"/>
<rect x="944.77" y="510.60" width="8" height="8" fill="#2b908f"/>
<rect x="973.65" y="505.80" width="8" height="8" fill="#2b908f"/>
<rect x="1002.53" y="499.20" width="8" height="8" fill="#2b908f"/>
<rect x="1031.41" y="485.90" width="8" height="8" fill="#2b908f"/>
<rect x="1060.29" y="489.10" width="8" height="8" fill="#2b908f"/>
<rect x="1089.17" y="497.90" width="8" height="8" fill="#2b908f"/>
<rect x="1118.05" y="479.00" width="8" height="8" fill="#2b908f"/>
<rect x="1146.93" y="483.10" width="8" height="8" fill="#2b908f"/>
<rect x="1175.81" y="479.00" width="8" height="8" fill="#2b908f"/>
<rect x="1204.69" y="474.90" width="8" height="8" fill="#2b908f"/>
<rect x="1233.57" y="463.80" width="8" height="8" fill="#2b908f"/>
<rect x="1262.45" y="449.00" width="8" height="8" fill="#2b908f"/>
<rect x="1291.33" y="433.20" width="8" height="8" fill="#2b908f"/>
<rect x="1320.21" y="418.80" width="8" height="8" fill="#2b908f"/>
<rect x="1349.09" y="414.00" width="8" height="8" fill="#2b908f"/>
<path d="M 688.85 611.00 C 688.85 611.00 706.18 610.50 717.73 609.50 C 729.28 608.50 735.06 607.60 746.61 606.00 C 758.16 604.40 763.94 603.40 775.49 601.50 C 787.04 599.60 792.82 599.00 804.37 596.50 C 815.92 594.00 821.70 592.06 833.25 589.00 C 844.80 585.94 850.58 587.00 862.13 581.20 C 873.68 575.40 879.46 567.14 891.01 560.00 C 902.56 552.86 908.34 551.26 919.89 545.50 C 931.44 539.74 937.22 535.00 948.77 531.20 C 960.32 527.40 966.10 528.64 977.65 526.50 C 989.20 524.36 994.98 523.40 1006.53 520.50 C 1018.08 517.60 1023.86 512.00 1035.41 512.00 C 1046.96 512.00 1052.74 513.00 1064.29 515.20 C 1075.84 517.40 1081.62 523.00 1093.17 523.00 C 1104.72 523.00 1110.50 512.60 1122.05 512.60 C 1133.60 512.60 1139.38 515.00 1150.93 515.00 C 1162.48 515.00 1168.26 514.20 1179.81 513.60 C 1191.36 513.00 1197.14 513.60 1208.69 512.00 C 1220.24 510.40 1226.02 508.06 1237.57 504.40 C 1249.12 500.74 1254.90 497.48 1266.45 493.70 C 1278.00 489.92 1283.78 489.20 1295.33 485.50 C 1306.88 481.80 1312.66 478.60 1324.21 475.20 C 1335.76 471.80 1353.09 468.50 1353.09 468.50" fill="none" stroke="#f45b5b" stroke-width="2.3" stroke-linejoin="round" stroke-linecap="round"/>
<path d="M 688.85 607.00 L 692.85 615.00 L 684.85 615.00 Z" fill="#f45b5b"/>
<path d="M 717.73 605.50 L 721.73 613.50 L 713.73 613.50 Z" fill="#f45b5b"/>
<path d="M 746.61 602.00 L 750.61 610.00 L 742.61 610.00 Z" fill="#f45b5b"/>
<path d="M 775.49 597.50 L 779.49 605.50 L 771.49 605.50 Z" fill="#f45b5b"/>
<path d="M 804.37 592.50 L 808.37 600.50 L 800.37 600.50 Z" fill="#f45b5b"/>
<path d="M 833.25 585.00 L 837.25 593.00 L 829.25 593.00 Z" fill="#f45b5b"/>
<path d="M 862.13 577.20 L 866.13 585.20 L 858.13 585.20 Z" fill="#f45b5b"/>
<path d="M 891.01 556.00 L 895.01 564.00 L 887.01 564.00 Z" fill="#f45b5b"/>
<path d="M 919.89 541.50 L 923.89 549.50 L 915.89 549.50 Z" fill="#f45b5b"/>
<path d="M 948.77 527.20 L 952.77 535.20 L 944.77 535.20 Z" fill="#f45b5b"/>
<path d="M 977.65 522.50 L 981.65 530.50 L 973.65 530.50 Z" fill="#f45b5b"/>
<path d="M 1006.53 516.50 L 1010.53 524.50 L 1002.53 524.50 Z" fill="#f45b5b"/>
<path d="M 1035.41 508.00 L 1039.41 516.00 L 1031.41 516.00 Z" fill="#f45b5b"/>
<path d="M 1064.29 511.20 L 1068.29 519.20 L 1060.29 519.20 Z" fill="#f45b5b"/>
<path d="M 1093.17 519.00 L 1097.17 527.00 L 1089.17 527.00 Z" fill="#f45b5b"/>
<path d="M 1122.05 508.60 L 1126.05 516.60 L 1118.05 516.60 Z" fill="#f45b5b"/>
<path d="M 1150.93 511.00 L 1154.93 519.00 L 1146.93 519.00 Z" fill="#f45b5b"/>
<path d="M 1179.81 509.60 L 1183.81 517.60 L 1175.81 517.60 Z" fill="#f45b5b"/>
<path d="M 1208.69 508.00 L 1212.69 516.00 L 1204.69 516.00 Z" fill="#f45b5b"/>
<path d="M 1237.57 500.40 L 1241.57 508.40 L 1233.57 508.40 Z" fill="#f45b5b"/>
<path d="M 1266.45 489.70 L 1270.45 497.70 L 1262.45 497.70 Z" fill="#f45b5b"/>
<path d="M 1295.33 481.50 L 1299.33 489.50 L 1291.33 489.50 Z" fill="#f45b5b"/>
<path d="M 1324.21 471.20 L 1328.21 479.20 L 1320.21 479.20 Z" fill="#f45b5b"/>
<path d="M 1353.09 464.50 L 1357.09 472.50 L 1349.09 472.50 Z" fill="#f45b5b"/>
<path d="M 688.85 619.00 C 688.85 619.00 706.18 618.24 717.73 617.80 C 729.28 617.36 735.06 617.40 746.61 616.80 C 758.16 616.20 763.94 615.68 775.49 614.80 C 787.04 613.92 792.82 613.36 804.37 612.40 C 815.92 611.44 821.70 611.12 833.25 610.00 C 844.80 608.88 850.58 608.80 862.13 606.80 C 873.68 604.80 879.46 604.26 891.01 600.00 C 902.56 595.74 908.34 592.30 919.89 585.50 C 931.44 578.70 937.22 571.52 948.77 566.00 C 960.32 560.48 966.10 560.62 977.65 557.90 C 989.20 555.18 994.98 554.66 1006.53 552.40 C 1018.08 550.14 1023.86 546.60 1035.41 546.60 C 1046.96 546.60 1052.74 549.00 1064.29 550.20 C 1075.84 551.40 1081.62 552.60 1093.17 552.60 C 1104.72 552.60 1110.50 551.60 1122.05 551.60 C 1133.60 551.60 1139.38 555.20 1150.93 555.20 C 1162.48 555.20 1168.26 553.54 1179.81 552.80 C 1191.36 552.06 1197.14 552.66 1208.69 551.50 C 1220.24 550.34 1226.02 547.00 1237.57 547.00 C 1249.12 547.00 1254.90 547.70 1266.45 547.70 C 1278.00 547.70 1283.78 546.22 1295.33 544.90 C 1306.88 543.58 1312.66 542.68 1324.21 541.10 C 1335.76 539.52 1353.09 537.00 1353.09 537.00" fill="none" stroke="#91e8e1" stroke-width="2.3" stroke-linejoin="round" stroke-linecap="round"/>
<path d="M 684.85 615.00 L 692.85 615.00 L 688.85 623.00 Z" fill="#91e8e1"/>
<path d="M 713.73 613.80 L 721.73 613.80 L 717.73 621.80 Z" fill="#91e8e1"/>
<path d="M 742.61 612.80 L 750.61 612.80 L 746.61 620.80 Z" fill="#91e8e1"/>
<path d="M 771.49 610.80 L 779.49 610.80 L 775.49 618.80 Z" fill="#91e8e1"/>
<path d="M 800.37 608.40 L 808.37 608.40 L 804.37 616.40 Z" fill="#91e8e1"/>
<path d="M 829.25 606.00 L 837.25 606.00 L 833.25 614.00 Z" fill="#91e8e1"/>
<path d="M 858.13 602.80 L 866.13 602.80 L 862.13 610.80 Z" fill="#91e8e1"/>
<path d="M 887.01 596.00 L 895.01 596.00 L 891.01 604.00 Z" fill="#91e8e1"/>
<path d="M 915.89 581.50 L 923.89 581.50 L 919.89 589.50 Z" fill="#91e8e1"/>
<path d="M 944.77 562.00 L 952.77 562.00 L 948.77 570.00 Z" fill="#91e8e1"/>
<path d="M 973.65 553.90 L 981.65 553.90 L 977.65 561.90 Z" fill="#91e8e1"/>
<path d="M 1002.53 548.40 L 1010.53 548.40 L 1006.53 556.40 Z" fill="#91e8e1"/>
<path d="M 1031.41 542.60 L 1039.41 542.60 L 1035.41 550.60 Z" fill="#91e8e1"/>
<path d="M 1060.29 546.20 L 1068.29 546.20 L 1064.29 554.20 Z" fill="#91e8e1"/>
<path d="M 1089.17 548.60 L 1097.17 548.60 L 1093.17 556.60 Z" fill="#91e8e1"/>
<path d="M 1118.05 547.60 L 1126.05 547.60 L 1122.05 555.60 Z" fill="#91e8e1"/>
<path d="M 1146.93 551.20 L 1154.93 551.20 L 1150.93 559.20 Z" fill="#91e8e1"/>
<path d="M 1175.81 548.80 L 1183.81 548.80 L 1179.81 556.80 Z" fill="#91e8e1"/>
<path d="M 1204.69 547.50 L 1212.69 547.50 L 1208.69 555.50 Z" fill="#91e8e1"/>
<path d="M 1233.57 543.00 L 1241.57 543.00 L 1237.57 551.00 Z" fill="#91e8e1"/>
<path d="M 1262.45 543.70 L 1270.45 543.70 L 1266.45 551.70 Z" fill="#91e8e1"/>
<path d="M 1291.33 540.90 L 1299.33 540.90 L 1295.33 548.90 Z" fill="#91e8e1"/>
<path d="M 1320.21 537.10 L 1328.21 537.10 L 1324.21 545.10 Z" fill="#91e8e1"/>
<path d="M 1349.09 533.00 L 1357.09 533.00 L 1353.09 541.00 Z" fill="#91e8e1"/>
<path d="M 678 715 L 694 715" stroke="#7cb5ec" stroke-width="2"/>
<circle cx="686.00" cy="715.00" r="4" fill="#7cb5ec"/>
<text x="699.6" y="719" font-size="12" font-weight="bold" fill="#333333">North East</text>
<path d="M 781.8 715 L 797.8 715" stroke="#434348" stroke-width="2"/>
<path d="M 789.80 711.00 L 793.80 715.00 L 789.80 719.00 L 785.80 715.00 Z" fill="#434348"/>
<text x="803.9" y="719" font-size="12" font-weight="bold" fill="#333333">North West</text>
<path d="M 889.9 715 L 905.9 715" stroke="#90ed7d" stroke-width="2"/>
<rect x="893.90" y="711.00" width="8" height="8" fill="#90ed7d"/>
<text x="911.2" y="719" font-size="12" font-weight="bold" fill="#333333">Yorkshire and The Humber</text>
<path d="M 1090.9 715 L 1106.9 715" stroke="#f7a35c" stroke-width="2"/>
<path d="M 1098.90 711.00 L 1102.90 719.00 L 1094.90 719.00 Z" fill="#f7a35c"/>
<text x="1112.2" y="719" font-size="12" font-weight="bold" fill="#333333">East Midlands</text>
<path d="M 1214.4 715 L 1230.4 715" stroke="#8085e9" stroke-width="2"/>
<path d="M 1218.40 711.00 L 1226.40 711.00 L 1222.40 719.00 Z" fill="#8085e9"/>
<text x="1234.7" y="719" font-size="12" font-weight="bold" fill="#333333">West Midlands</text>

<circle cx="1149.8" cy="436.3" r="9" fill="#e4d354" fill-opacity="0.25"/>
<path d="M 1149.8 430.3 L 1155.8 436.3 L 1149.8 442.3 L 1143.8 436.3 Z" fill="#e4d354" stroke="#fff" stroke-width="1"/>
<path d="M 1089.1 375.4 L 1214.7 375.4 Q 1217.7 375.4 1217.7 378.4 L 1217.7 420.2 Q 1217.7 423.2 1214.7 423.2 L 1157.6 423.2 L 1151.6 429.9 L 1145.6 423.2 L 1089.1 423.2 Q 1086.1 423.2 1086.1 420.2 L 1086.1 378.4 Q 1086.1 375.4 1089.1 375.4 Z" fill="#000" fill-opacity="0.06" transform="translate(1,1)"/>
<path d="M 1088.6 374.9 L 1214.2 374.9 Q 1217.2 374.9 1217.2 377.9 L 1217.2 419.7 Q 1217.2 422.7 1214.2 422.7 L 1156.6 422.7 L 1150.6 428.9 L 1144.6 422.7 L 1088.6 422.7 Q 1085.6 422.7 1085.6 419.7 L 1085.6 377.9 Q 1085.6 374.9 1088.6 374.9 Z" fill="#f7f7f7" fill-opacity="0.96" stroke="#e4d354" stroke-width="1"/>
<text x="1093.9" y="393.7" font-size="10" fill="#333333" letter-spacing="0.6">2011</text>
<circle cx="1097.2" cy="405.4" r="3.6" fill="#e4d354"/>
<text x="1107.2" y="408.3" font-size="12" fill="#333333" letter-spacing="0.65">London: <tspan font-weight="bold">292 000</tspan></text>

</svg>

<svg class="abs" style="left:1136px;top:521px" width="14" height="21" viewBox="0 0 14 21"><path d="M1.3 1.3 L1.3 17.3 L5.3 13.8 L7.9 19.6 L10.1 18.7 L7.6 13 L12.4 12.6 Z" fill="#fff" stroke="#000" stroke-width="1" stroke-linejoin="miter"/></svg>
<div id="vscroll"></div>
<div class="abs" style="left:1426px;top:112px;width:13px;height:244px;background:#c1c1c1"></div>
<svg class="abs" style="left:1424px;top:63px" width="16" height="16"><path d="M4 11 L12 11 L8 6 Z" fill="#505050"/></svg>
<svg class="abs" style="left:1424px;top:710px" width="16" height="16"><path d="M4 5 L12 5 L8 10 Z" fill="#505050"/></svg>

<div id="ftr">
  <span style="left:1081.5px;top:6px;font-size:9.2px">Feedback</span>
  <span style="left:1138px;top:6px;font-size:9.2px">Enquiry</span>
  <span style="left:1184px;top:6px;font-size:9.2px">Need Help?</span>
  <span style="left:1248px;top:6px;font-size:9.2px">Training</span>
  <span style="left:1300px;top:2.5px;font-size:9px;line-height:9.7px;text-align:right;width:109px">Powered by SuperSTAR<br>WingArc Australia</span>
  <svg style="position:absolute;left:1416px;top:3px" width="20" height="18" viewBox="0 0 20 18"><path d="M3.2 1.8 Q3.6 0.6 5.2 0.6 L6.8 0.6 Q8.2 0.6 8 2 L6.4 15.8 Q6.2 17.4 4.6 17.4 L3 17.4 Q1.5 17.4 1.7 15.8 Z" fill="#b8392c"/><path d="M4.8 3.2 L6.6 3.2 L5.3 14.6 L3.5 14.6 L4.5 6.6 L3.2 7.2 L3.5 5.2 Z" fill="#fff"/><text x="8.2" y="14.5" font-size="8" font-style="italic" font-weight="bold" fill="#1b2a55" font-family="Liberation Sans" transform="skewX(-8)">ST</text></svg>
</div>
</body></html>
